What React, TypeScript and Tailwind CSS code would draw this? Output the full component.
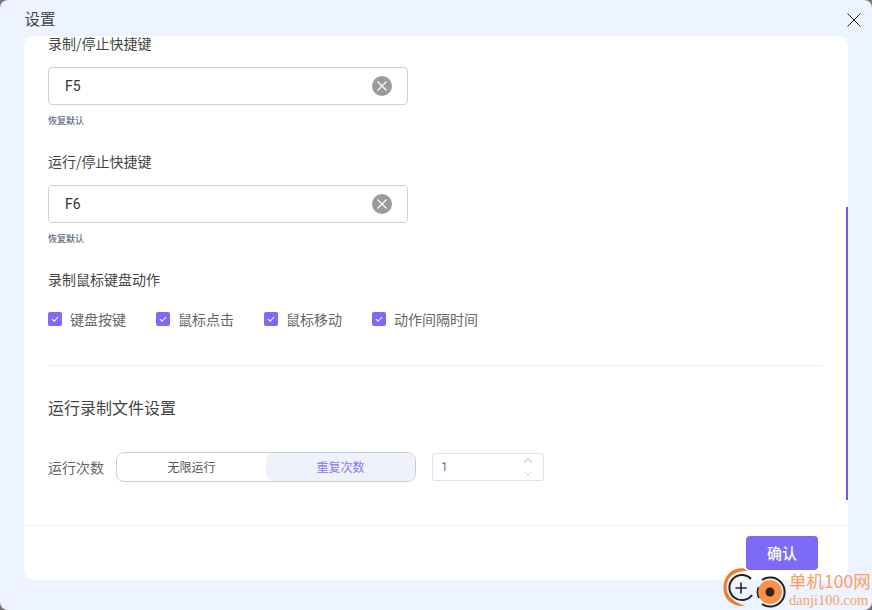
import React from "react";

const font = { fontFamily: '"Noto Sans CJK SC", "Liberation Sans", sans-serif' };

function Shortcut({ label, value }: { label: string; value: string }) {
  return (
    <div className="flex flex-col">
      <div className="h-[20px] text-[14px] leading-[20px] text-[#444]">{label}</div>
      <div className="mt-[14px] flex h-[38px] w-[360px] items-center justify-between rounded-[4px] border border-[#cfcfd4] pl-[16px] pr-[15px]">
        <span className="text-[14px] text-[#333]" style={{ fontFamily: '"Roboto", sans-serif' }}>{value}</span>
        <svg width="20" height="20" viewBox="0 0 20 20">
          <circle cx="10" cy="10" r="10" fill="#9a9a9a" />
          <path d="M5.5 5.5 14.5 14.5M14.5 5.5 5.5 14.5" stroke="#fff" strokeWidth="1.2" />
        </svg>
      </div>
      <div className="mt-[9px] h-[14px] text-[9px] font-medium leading-[14px] text-[#5d6b82]">恢复默认</div>
    </div>
  );
}

function Check({ label }: { label: string }) {
  return (
    <div className="flex items-center gap-[8px]">
      <span className="flex h-[14px] w-[14px] items-center justify-center rounded-[2px] bg-[#7d6bf6]">
        <svg width="10" height="10" viewBox="0 0 10 10" fill="none">
          <path d="M2 5.2 4.2 7.3 8 3" stroke="#fff" strokeWidth="1.1" />
        </svg>
      </span>
      <span className="text-[14px] leading-[20px] text-[#666]">{label}</span>
    </div>
  );
}

function Watermark() {
  return (
    <div className="absolute bottom-0 right-0 flex h-[45px] w-[152px] items-start">
      <svg width="69" height="45" viewBox="0 0 69 45" className="shrink-0">
        <path d="M24 3.5C12 2 3.5 11 3.5 23 3.5 34 12 42 25 41 18 38 7 34 6.5 23 6.5 12 14 6 27 6Z" fill="#f47a1f" />
        <path d="M31 14A12.5 12.5 0 1 0 32 30" fill="none" stroke="#222" strokeWidth="2" />
        <path d="M15.5 23h11M21 17.5v11" stroke="#222" strokeWidth="1.6" />
        <circle cx="50" cy="27" r="12" fill="#f9914a" />
        <path d="M42 15A14.5 14.5 0 1 1 42 39" fill="none" stroke="#222" strokeWidth="2" />
        <path d="M38.5 22A12.5 12.5 0 0 0 39 33" fill="none" stroke="#222" strokeWidth="1.5" />
        <circle cx="50" cy="27" r="4.5" fill="#33261c" />
      </svg>
      <div className="flex flex-col">
        <span className="mt-[7px] whitespace-nowrap text-[17.5px] leading-[18px] text-[#f9a066]">单机100网</span>
        <span className="mt-[2px] whitespace-nowrap text-[14.5px] leading-[17px] text-[#f9a066]" style={{ fontFamily: '"Liberation Serif", serif' }}>danji100.com</span>
      </div>
    </div>
  );
}

export default function App() {
  return (
    <div className="h-[610px] w-[872px] bg-[#777]">
      <div className="relative flex h-[610px] w-[872px] flex-col overflow-hidden rounded-[8px] bg-[#edf3ff]" style={font}>
        <div className="flex h-[36px] shrink-0 items-start justify-between pl-[24.5px] pr-[11px] pt-[8px]">
          <span className="text-[15.5px] leading-[20px] text-[#444]">设置</span>
          <svg width="14" height="14" viewBox="0 0 14 14" className="mt-[5px]">
            <path d="M.5.5 13.5 13.5M13.5.5.5 13.5" stroke="#222" strokeWidth="1" />
          </svg>
        </div>
        <div className="mx-[24px] flex h-[544px] flex-col overflow-hidden rounded-[10px] bg-white">
          <div className="relative h-[489px] shrink-0 overflow-hidden">
            <div className="-mt-[3px] flex flex-col pl-[24px] pr-[26px]">
              <Shortcut label="录制/停止快捷键" value="F5" />
              <div className="mt-[23px]">
                <Shortcut label="运行/停止快捷键" value="F6" />
              </div>
              <div className="mt-[23px] h-[20px] text-[14px] leading-[20px] text-[#444]">录制鼠标键盘动作</div>
              <div className="mt-[20px] flex gap-[30px]">
                <Check label="键盘按键" />
                <Check label="鼠标点击" />
                <Check label="鼠标移动" />
                <Check label="动作间隔时间" />
              </div>
              <div className="mt-[36px] h-px bg-[#ececef]" />
              <div className="mt-[30px] h-[22px] text-[16px] leading-[22px] text-[#444]">运行录制文件设置</div>
              <div className="mt-[34px] flex items-center">
                <span className="w-[68px] text-[14px] leading-[20px] text-[#666]">运行次数</span>
                <div className="flex h-[30px] w-[300px] rounded-[8px] border border-[#cdcdd6]">
                  <div className="flex flex-1 items-center justify-center text-[12px] text-[#555]">无限运行</div>
                  <div className="flex flex-1 items-center justify-center rounded-[8px] bg-[#eff2fb] text-[12px] text-[#8a74f7]">重复次数</div>
                </div>
                <div className="ml-[16px] flex h-[28px] w-[112px] items-center justify-between rounded-[3px] border border-[#dfe0e8] pl-[8px] pr-[10px]">
                  <span className="text-[12px] text-[#4f6fb5]" style={{ fontFamily: '"Roboto", sans-serif' }}>1</span>
                  <svg width="10" height="22" viewBox="0 0 10 22" fill="none">
                    <path d="M1 6.5 5 2.5 9 6.5" stroke="#a8a8a8" strokeWidth="1" />
                    <path d="M2 16 5 19 8 16" stroke="#cfcfcf" strokeWidth="1" />
                  </svg>
                </div>
              </div>
            </div>
            <div className="absolute right-0 top-[171px] h-[293px] w-[2px] bg-[#6f5fe0]" />
          </div>
          <div className="flex flex-1 justify-end border-t border-[#eeeef0] pr-[30px] pt-[10px]">
            <div className="flex h-[34px] w-[72px] items-center justify-center rounded-[4px] bg-[#7d6bf8] text-[15px] font-medium text-white">确认</div>
          </div>
        </div>
        <Watermark />
      </div>
    </div>
  );
}
